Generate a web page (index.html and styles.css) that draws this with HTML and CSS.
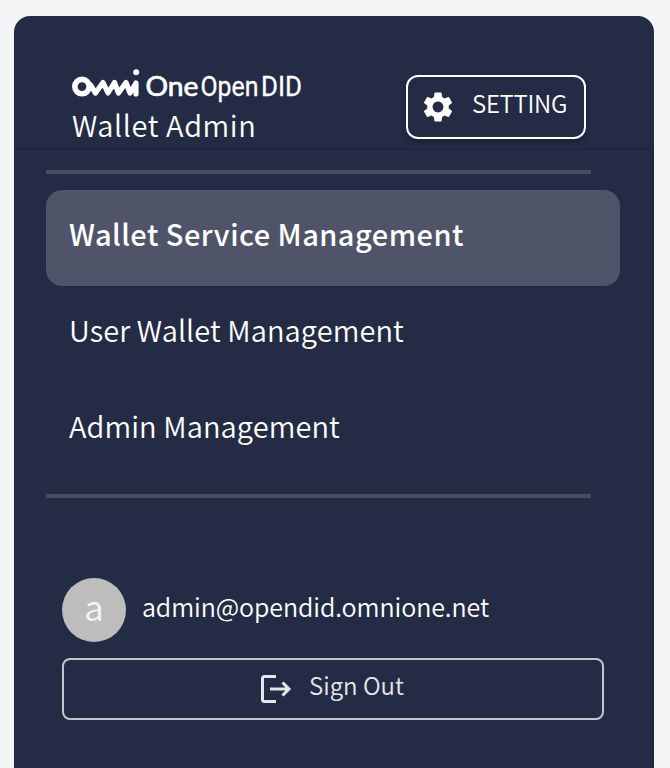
FILE: index.html
```html
<!DOCTYPE html>
<html lang="en">
<head>
<meta charset="utf-8">
<title>Wallet Admin</title>
<link rel="stylesheet" href="styles.css">
</head>
<body>
<div class="sidebar">
  <header class="header">
    <div class="brand">
      <svg class="logo" width="232" height="36" viewBox="0 0 232 36" aria-label="Omni One Open DID">
        <g fill="none" stroke="#fff" stroke-linecap="round" stroke-linejoin="round">
          <circle cx="10" cy="18.6" r="7.2" stroke-width="5.6"/>
          <path d="M18.5 17 L23.5 25 L31 14.5 L36 25 L42.5 14.5 L46.5 25 L54 14.5 L58 25 L64 15 V26" stroke-width="5.2"/>
        </g>
        <circle cx="64.2" cy="4.2" r="3" fill="#fff"/>
        <text class="logo-one" x="73.5" y="28" textLength="53" lengthAdjust="spacingAndGlyphs">One</text>
        <text class="logo-open" x="128.5" y="28" textLength="58" lengthAdjust="spacingAndGlyphs">Open</text>
        <text class="logo-open" x="189" y="28" textLength="41" lengthAdjust="spacingAndGlyphs">DID</text>
      </svg>
      <div class="product">Wallet Admin</div>
    </div>
    <button class="setting">
      <svg width="36" height="36" viewBox="0 0 24 24" fill="#fff"><path d="M19.14 12.94c.04-.3.06-.61.06-.94 0-.32-.02-.64-.07-.94l2.03-1.58c.18-.14.23-.41.12-.61l-1.92-3.32c-.12-.22-.37-.29-.59-.22l-2.39.96c-.5-.38-1.03-.7-1.62-.94l-.36-2.54c-.04-.24-.24-.41-.48-.41h-3.84c-.24 0-.43.17-.47.41l-.36 2.54c-.59.24-1.13.57-1.62.94l-2.39-.96c-.22-.08-.47 0-.59.22L2.74 8.87c-.12.21-.08.47.12.61l2.03 1.58c-.05.3-.09.63-.09.94s.02.64.07.94l-2.03 1.58c-.18.14-.23.41-.12.61l1.92 3.32c.12.22.37.29.59.22l2.39-.96c.5.38 1.03.7 1.62.94l.36 2.54c.05.24.24.41.48.41h3.84c.24 0 .44-.17.47-.41l.36-2.54c.59-.24 1.13-.56 1.62-.94l2.39.96c.22.08.47 0 .59-.22l1.92-3.32c.12-.22.07-.47-.12-.61l-2.01-1.58zM12 15.6c-1.98 0-3.6-1.62-3.6-3.6s1.62-3.6 3.6-3.6 3.6 1.62 3.6 3.6-1.62 3.6-3.6 3.6z"/></svg>
      <span>SETTING</span>
    </button>
  </header>
  <div class="body">
    <hr class="rule">
    <nav class="menu">
      <a class="item active">Wallet Service Management</a>
      <a class="item">User Wallet Management</a>
      <a class="item">Admin Management</a>
    </nav>
    <hr class="rule">
    <div class="account">
      <div class="profile">
        <div class="avatar">a</div>
        <div class="email">admin@opendid.omnione.net</div>
      </div>
      <button class="signout">
        <svg width="32" height="30" viewBox="0 0 32 30" fill="none" stroke="#e6e7ea" stroke-width="3"><path d="M16 2.5H4.5Q2.5 2.5 2.5 4.5V25.5Q2.5 27.5 4.5 27.5H16M10 15H29M22.5 8.5L29 15L22.5 21.5"/></svg>
        <span>Sign Out</span>
      </button>
    </div>
  </div>
</div>
</body>
</html>
```
FILE: styles.css
```css
* { box-sizing: border-box; }
body {
  margin: 0;
  height: 768px;
  overflow: hidden;
  padding: 16px 16px 0 14px;
  background: #f4f5f7;
  color: #fff;
  font-family: "Noto Sans CJK KR", "Noto Sans", sans-serif;
  font-weight: 350;
}
button { background: none; color: inherit; font: inherit; padding: 0; }
.sidebar {
  height: 752px;
  background: #242b44;
  border-radius: 16px 16px 0 0;
  overflow: hidden;
}
.header {
  height: 134px;
  display: flex;
  justify-content: space-between;
  padding: 52px 68px 0 58px;
  border-bottom: 2px solid #20263d;
}
.logo { display: block; }
.logo-one, .logo-open {
  fill: #fff;
  stroke: #fff;
  font-family: Roboto, sans-serif;
  font-size: 27.5px;
  font-weight: 400;
}
.logo-one { font-family: Lato, sans-serif; font-size: 27px; stroke-width: .7px; }
.logo-open { stroke-width: .3px; }
.product { font-size: 29px; line-height: 40px; letter-spacing: .6px; white-space: nowrap; }
.setting {
  width: 180px;
  height: 64px;
  margin-top: 7px;
  display: flex;
  align-items: center;
  padding-left: 12px;
  gap: 16px;
  border: 2px solid #fff;
  border-radius: 12px;
  box-shadow: 0 3px 5px rgba(0, 0, 0, .3);
  font-size: 24px;
  letter-spacing: -.3px;
}
.setting span { line-height: 36px; margin-top: -8px; }
.body {
  height: 618px;
  padding: 20px 32px 0;
  border-right: 2px solid #20263d;
}
.rule { width: 545px; height: 4px; margin: 0; border: 0; background: #484c5e; }
.menu { width: 574px; margin: 16px 0; }
.item {
  display: block;
  height: 96px;
  padding: 23px;
  border-radius: 16px;
  font-size: 29px;
  line-height: 40px;
  letter-spacing: .08px;
  white-space: nowrap;
}
.active { background: #505468; font-weight: 500; letter-spacing: .48px; }
.account { padding: 80px 0 0 16px; }
.profile { display: flex; gap: 16px; height: 64px; }
.avatar {
  width: 64px;
  height: 64px;
  border-radius: 50%;
  background: #bdbdbd;
  color: #f4f4f4;
  font-size: 35px;
  line-height: 56px;
  text-align: center;
}
.email { font-size: 25px; line-height: 57px; letter-spacing: -.08px; }
.signout {
  width: 542px;
  height: 62px;
  margin-top: 16px;
  display: flex;
  align-items: center;
  justify-content: center;
  gap: 17px;
  padding-right: 2px;
  border: 2px solid #c3c5cb;
  border-radius: 8px;
  color: #e6e7ea;
  font-size: 24px;
}
.signout span { line-height: 36px; margin-top: -8px; }
```
